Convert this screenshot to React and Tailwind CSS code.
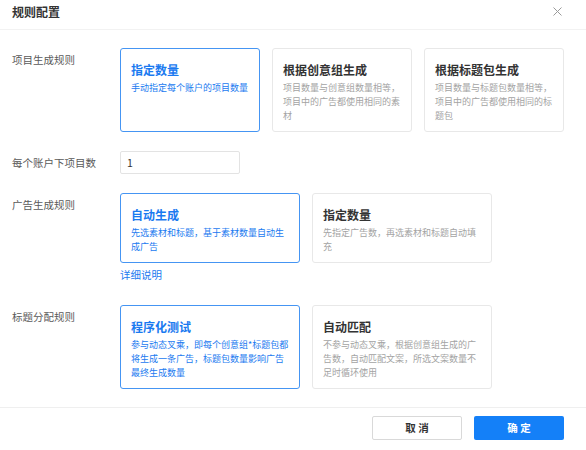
import React, { useState } from "react";

const FONT = { fontFamily: '"Noto Sans CJK SC", "Noto Sans", sans-serif' };

const OptionCard = ({ title, desc, active, onClick, width }) => (
  <div
    onClick={onClick}
    className={`${width} shrink-0 cursor-pointer rounded-[3px] border px-[10px] pt-[12px] pb-[8px] ${
      active ? "border-[#4595f3]" : "border-[#e8e8e8]"
    }`}
  >
    <div
      className={`mb-[2px] text-[12px] leading-[18px] font-bold ${
        active ? "text-[#1a7af0]" : "text-[#333333]"
      }`}
    >
      {title}
    </div>
    <div
      className={`text-[9px] leading-[14px] ${
        active ? "text-[#1a7af0]" : "text-[#a3a3a3]"
      }`}
    >
      {desc}
    </div>
  </div>
);

const Label = ({ children, top = true }) => (
  <div
    className={`w-[108px] shrink-0 text-[10.5px] leading-[14px] text-[#5a5a5a] ${
      top ? "mt-[5px]" : ""
    }`}
  >
    {children}
  </div>
);

export default function App() {
  const [projectRule, setProjectRule] = useState(0);
  const [adRule, setAdRule] = useState(0);
  const [titleRule, setTitleRule] = useState(0);
  const [count, setCount] = useState("1");

  const projectCards = [
    { title: "指定数量", desc: "手动指定每个账户的项目数量" },
    {
      title: "根据创意组生成",
      desc: (
        <>
          项目数量与创意组数量相等，
          <br />
          项目中的广告都使用相同的素材
        </>
      ),
    },
    {
      title: "根据标题包生成",
      desc: (
        <>
          项目数量与标题包数量相等，
          <br />
          项目中的广告都使用相同的标题包
        </>
      ),
    },
  ];

  const adCards = [
    { title: "自动生成", desc: "先选素材和标题，基于素材数量自动生成广告" },
    { title: "指定数量", desc: "先指定广告数，再选素材和标题自动填充" },
  ];

  const titleCards = [
    {
      title: "程序化测试",
      desc: "参与动态叉乘，即每个创意组*标题包都将生成一条广告，标题包数量影响广告最终生成数量",
    },
    {
      title: "自动匹配",
      desc: "不参与动态叉乘，根据创意组生成的广告数，自动匹配文案，所选文案数量不足时循环使用",
    },
  ];

  return (
    <div className="h-[450px] w-[586px] overflow-hidden bg-white" style={FONT}>
      {/* header */}
      <div className="flex h-[30px] items-start justify-between border-b border-[#f2f2f2] pl-3 pr-[24px] pt-[3px]">
        <div className="text-[12px] leading-[18px] font-bold text-[#333333]">规则配置</div>
        <button className="mt-[4px] text-[#9a9a9a]">
          <svg width="9" height="9" viewBox="0 0 9 9" fill="none" stroke="currentColor" strokeWidth="1">
            <path d="M0.5 0.5L8.5 8.5M8.5 0.5L0.5 8.5" />
          </svg>
        </button>
      </div>

      {/* body */}
      <div className="px-3 pt-[18px]">
        <div className="flex">
          <Label>项目生成规则</Label>
          <div className="flex gap-3">
            {projectCards.map((c, i) => (
              <OptionCard
                key={i}
                width="w-[140px]"
                title={c.title}
                desc={c.desc}
                active={projectRule === i}
                onClick={() => setProjectRule(i)}
              />
            ))}
          </div>
        </div>

        <div className="mt-[19px] flex items-center">
          <Label top={false}>每个账户下项目数</Label>
          <input
            value={count}
            onChange={(e) => setCount(e.target.value)}
            className="h-[23px] w-[120px] rounded-[2px] border border-[#e3e3e3] px-[6px] text-[10.5px] text-[#333333] outline-none"
          />
        </div>

        <div className="mt-[19px] flex">
          <Label>广告生成规则</Label>
          <div>
            <div className="flex gap-3">
              {adCards.map((c, i) => (
                <OptionCard
                  key={i}
                  width="w-[180px]"
                  title={c.title}
                  desc={c.desc}
                  active={adRule === i}
                  onClick={() => setAdRule(i)}
                />
              ))}
            </div>
            <div className="mt-[5px] text-[10.5px] leading-[14px] text-[#1a7af0]">详细说明</div>
          </div>
        </div>

        <div className="mt-[23px] flex">
          <Label>标题分配规则</Label>
          <div className="flex gap-3">
            {titleCards.map((c, i) => (
              <OptionCard
                key={i}
                width="w-[180px]"
                title={c.title}
                desc={c.desc}
                active={titleRule === i}
                onClick={() => setTitleRule(i)}
              />
            ))}
          </div>
        </div>
      </div>

      {/* footer */}
      <div className="mt-[18px] flex justify-end gap-3 border-t border-[#efefef] pr-[22px] pt-[8px]">
        <button className="h-[24px] w-[90px] rounded-[2px] border border-[#d9d9d9] bg-white text-[10.5px] font-bold text-[#333333]">
          取 消
        </button>
        <button className="h-[24px] w-[90px] rounded-[2px] bg-[#1480f8] text-[10.5px] font-bold text-white">
          确 定
        </button>
      </div>
    </div>
  );
}
